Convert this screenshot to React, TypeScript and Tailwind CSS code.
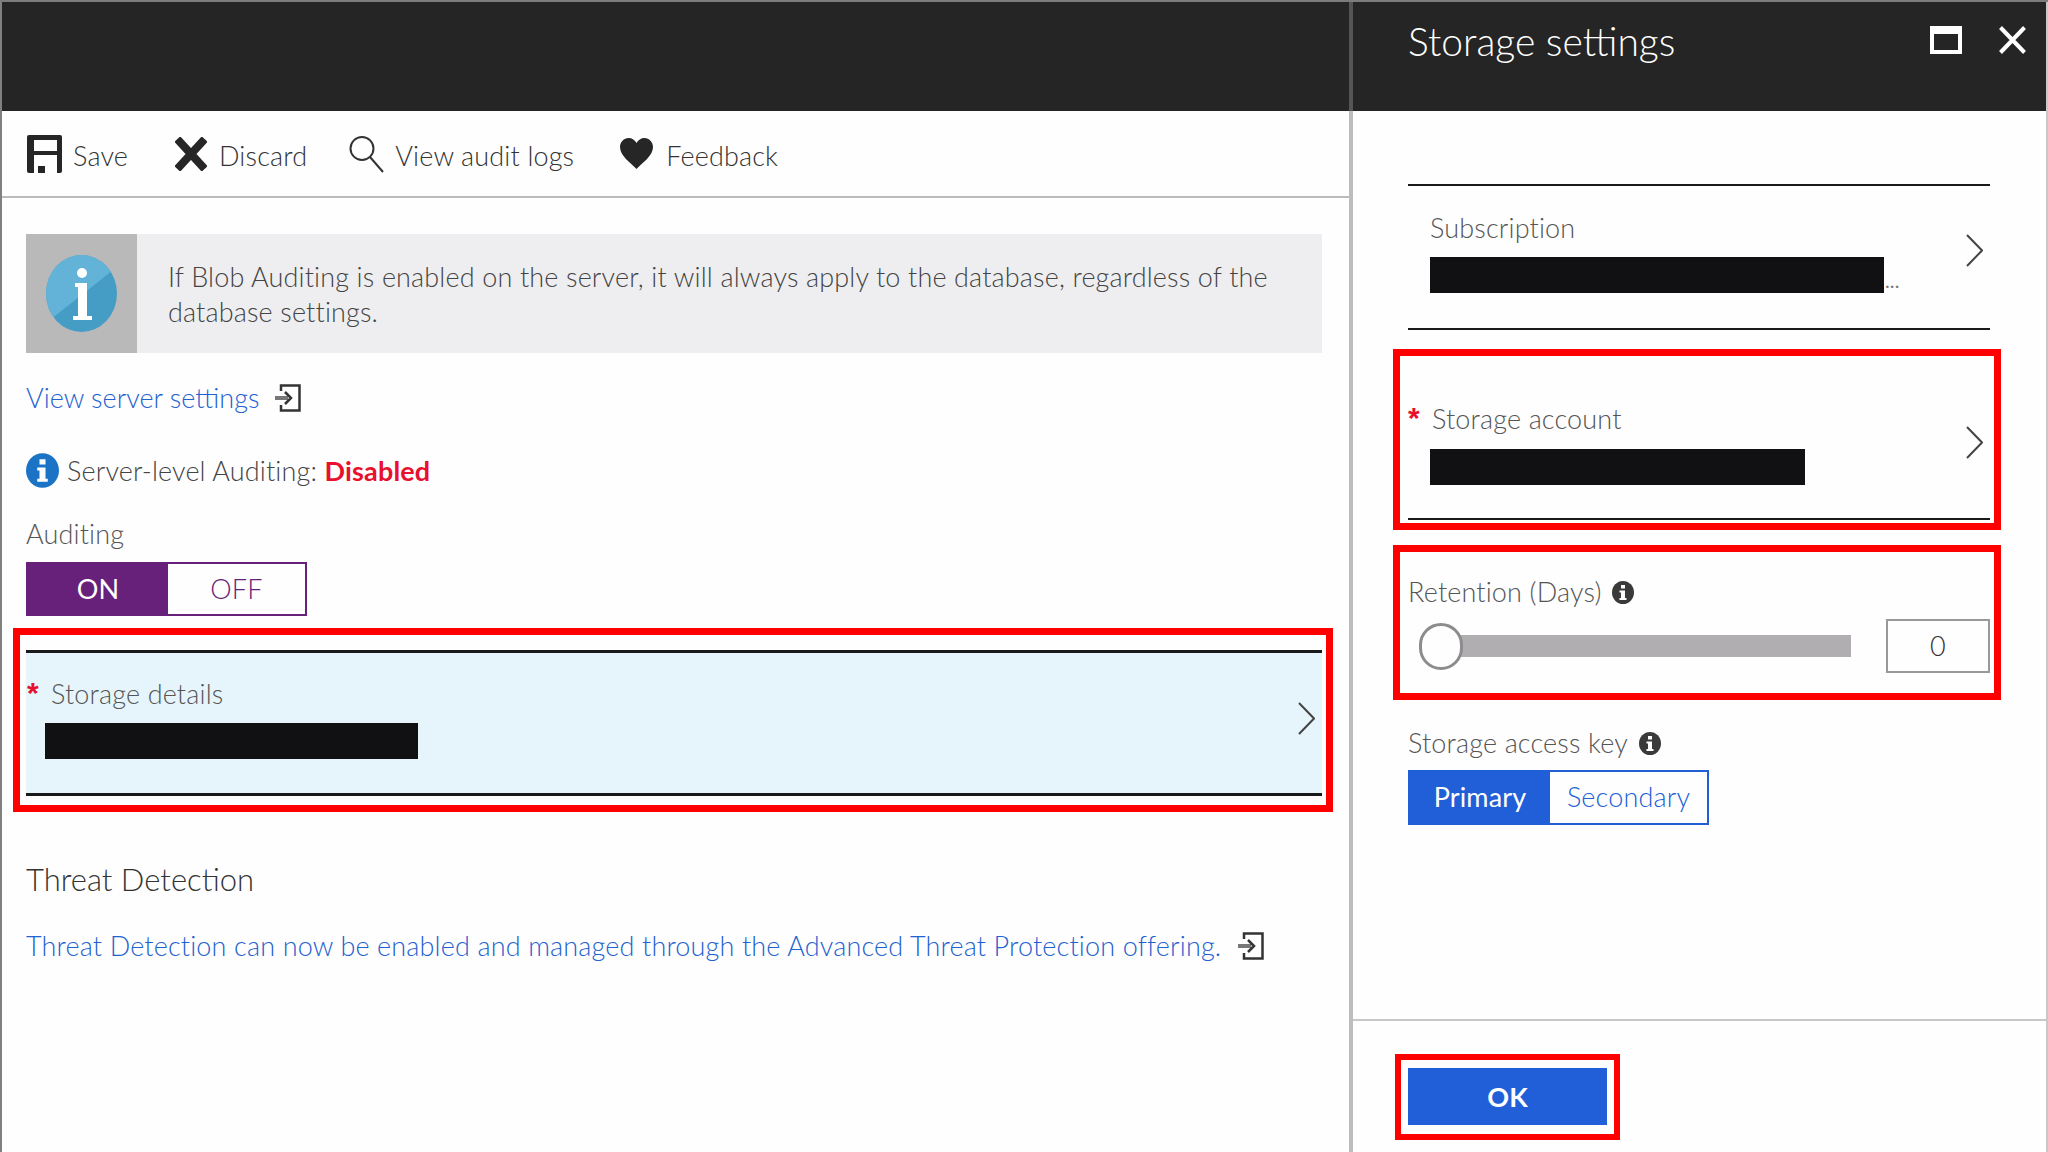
const font = 'font-["Lato","Open_Sans",sans-serif] font-light';

const SaveIcon = () => (
  <svg width="35" height="38" viewBox="0 0 35 38">
    <path d="M2 0H33a2 2 0 0 1 2 2V36a2 2 0 0 1-2 2H2a2 2 0 0 1-2-2V2a2 2 0 0 1 2-2z" fill="#262626" />
    <rect x="7" y="5" width="23" height="11" fill="#fff" />
    <rect x="7" y="20" width="23" height="18" fill="#fff" />
    <rect x="11" y="31" width="7" height="7" fill="#262626" />
  </svg>
);

const DiscardIcon = () => (
  <svg width="32" height="34" viewBox="0 0 32 34">
    <path d="M5 5L27 29M27 5L5 29" stroke="#262626" strokeWidth="8" strokeLinecap="square" fill="none" />
  </svg>
);

const SearchIcon = () => (
  <svg width="36" height="38" viewBox="0 0 36 38" fill="none">
    <circle cx="14" cy="13.500" r="11.500" stroke="#333" strokeWidth="2" />
    <path d="M22 22L35 37" stroke="#333" strokeWidth="2" />
  </svg>
);

const HeartIcon = () => (
  <svg width="33" height="31" viewBox="0 0 33 31">
    <path d="M16.500 31C11 25 0 18 0 9C0 4 4 0 8.500 0C12 0 15 2 16.500 5C18 2 21 0 24.500 0C29 0 33 4 33 9C33 18 22 25 16.500 31Z" fill="#262626" />
  </svg>
);

const OpenIcon = () => (
  <svg width="26" height="28" viewBox="0 0 26 28" fill="none">
    <path d="M6 7V1.500H24.500V26.500H6V21" stroke="#333" strokeWidth="2.500" />
    <path d="M0 14H13" stroke="#777" strokeWidth="4" />
    <path d="M10 8L16 14L10 20" stroke="#333" strokeWidth="2.500" />
  </svg>
);

const BigInfo = () => (
  <svg width="71" height="77" viewBox="0 0 71 77">
    <clipPath id="oval">
      <ellipse cx="35.500" cy="38.500" rx="35.500" ry="38.500" />
    </clipPath>
    <g clipPath="url(#oval)">
      <rect width="71" height="77" fill="#459dc6" />
      <path d="M0 0H71V12L0 68Z" fill="#62b3d7" />
    </g>
    <circle cx="36" cy="18" r="5" fill="#fff" />
    <path d="M29 28H41V61H46V65H27V61H32V32H29Z" fill="#fff" />
  </svg>
);

const SmallInfo = ({ color, w, h }: { color: string; w: number; h: number }) => (
  <svg width={w} height={h} viewBox="0 0 22 23">
    <ellipse cx="11" cy="11.500" rx="11" ry="11.500" fill={color} />
    <rect x="9" y="4" width="4" height="3.500" fill="#fff" />
    <path d="M7.500 9.500H13V17H14.500V19H7.500V17H9V11.500H7.500Z" fill="#fff" />
  </svg>
);

const Chevron = () => (
  <svg width="17" height="33" viewBox="0 0 17 33" fill="none">
    <path d="M1 1L16 16.500L1 32" stroke="#444" strokeWidth="2" />
  </svg>
);

const Star = () => (
  <span className='font-["Liberation_Sans",sans-serif] text-[30px] leading-[30px] font-bold text-[#e8112d]'>*</span>
);

const Bar = ({ w }: { w: string }) => <div className={`${w} h-[36px] bg-[#111114]`} />;

export default function App() {
  return (
    <div className={`${font} flex h-[1152px] w-[2048px] overflow-hidden border-t-2 border-[#7c7c7c] bg-[#fefefe] text-[27px] tracking-[0.15px] text-[#444]`}>
      {/* left blade */}
      <div className="flex w-[1349px] shrink-0 flex-col border-l-2 border-[#808080]">
        <div className="h-[109px] bg-[#252525]" />
        <div className="flex h-[87px] items-center border-b-2 border-[#bbb] pl-[25px] text-[#333]">
          <div className="flex items-center gap-[11px]"><SaveIcon /><span className="pt-[5px]">Save</span></div>
          <div className="ml-[47px] flex items-center gap-[12px]"><DiscardIcon /><span className="pt-[5px]">Discard</span></div>
          <div className="ml-[41px] flex items-center gap-[11px]"><SearchIcon /><span className="pt-[5px]">View audit logs</span></div>
          <div className="ml-[46px] flex items-center gap-[13px]"><HeartIcon /><span className="pt-[5px]">Feedback</span></div>
        </div>

        <div className="flex flex-col pl-[24px] pr-[27px]">
          <div className="mt-[36px] flex h-[119px] bg-[#eeeef0]">
            <div className="flex w-[111px] shrink-0 items-center justify-center bg-[#b9b9b9]"><BigInfo /></div>
            <p className="pl-[31px] pr-[40px] pt-[25px] leading-[35px] text-[#444]">
              If Blob Auditing is enabled on the server, it will always apply to the database, regardless of the database settings.
            </p>
          </div>

          <div className="mt-[30px] flex h-[30px] items-center gap-[16px] tracking-normal text-[#1f62d0]">
            View server settings <OpenIcon />
          </div>

          <div className="mt-[39px] flex h-[36px] items-center gap-[8px] text-[#444]">
            <SmallInfo color="#1a73c4" w={33} h={35} />
            <span className="pt-[3px]">
              Server-level Auditing: <span className="font-bold text-[#e8112d]">Disabled</span>
            </span>
          </div>

          <div className="mt-[31px] h-[30px] leading-[30px] text-[#555]">Auditing</div>
          <div className="mt-[13px] flex h-[54px] w-[281px] border-2 border-[#68217a]">
            <div className="flex w-[140px] items-center justify-center bg-[#68217a] font-normal text-white">ON</div>
            <div className="flex flex-1 items-center justify-center text-[#68217a]">OFF</div>
          </div>

          <div className="-ml-[13px] -mr-[11px] mt-[12px] h-[184px] border-[7px] border-[#ff0000] pl-[6px] pr-[4px] pt-[15px]">
            <div className="flex h-[146px] items-center justify-between border-y-[3px] border-[#1a1a1a] bg-[#e5f5fb] pb-[10px] pr-[7px]">
              <div className="flex flex-col">
                <div className="mt-[2px] flex h-[30px] items-center text-[#555]">
                  <span className="mt-[-2px] w-[25px] pl-[1px]"><Star /></span>Storage details
                </div>
                <div className="ml-[19px] mt-[14px]"><Bar w="w-[373px]" /></div>
              </div>
              <Chevron />
            </div>
          </div>

          <div className="mt-[47px] h-[40px] text-[31px] leading-[40px] tracking-normal text-[#333]">Threat Detection</div>
          <div className="mt-[32px] flex h-[30px] items-center gap-[17px] text-[#1f62d0]">
            Threat Detection can now be enabled and managed through the Advanced Threat Protection offering. <OpenIcon />
          </div>
        </div>
      </div>

      {/* divider */}
      <div className="flex w-[4px] shrink-0 flex-col bg-[#bdbdbd]">
        <div className="h-[109px] bg-[#555]" />
      </div>

      {/* right blade */}
      <div className="flex flex-1 flex-col border-r-2 border-[#c8c8c8]">
        <div className="flex h-[109px] items-start justify-between bg-[#252525] pl-[55px] pr-[20px] text-white">
          <div className="mt-[19px] text-[39px] leading-[40px] tracking-normal">Storage settings</div>
          <div className="mt-[24px] flex items-start gap-[37px]">
            <svg width="32" height="28" viewBox="0 0 32 28" fill="none">
              <rect x="2" y="2" width="28" height="24" stroke="#fff" strokeWidth="4" />
              <rect x="0" y="0" width="32" height="8" fill="#fff" />
            </svg>
            <svg width="27" height="28" viewBox="0 0 27 28" fill="none">
              <path d="M1.500 1.500L25.500 26.500M25.500 1.500L1.500 26.500" stroke="#fff" strokeWidth="4" />
            </svg>
          </div>
        </div>

        <div className="flex flex-1 flex-col pl-[55px] pr-[56px]">
          <div className="mt-[73px] flex h-[146px] items-center justify-between border-y-2 border-[#1a1a1a] pr-[7px]">
            <div className="mb-[8px] flex flex-col pl-[22px]">
              <div className="h-[30px] leading-[30px] text-[#555]">Subscription</div>
              <div className="mt-[14px] flex items-end">
                <Bar w="w-[454px]" />
                <span className="mb-[4px] ml-[1px] text-[20px] leading-[18px] font-normal text-[#777]">...</span>
              </div>
            </div>
            <span className="mb-[14px]"><Chevron /></span>
          </div>

          <div className="-ml-[15px] -mr-[11px] mt-[19px] h-[181px] border-[7px] border-[#ff0000] pl-[8px] pr-[4px]">
            <div className="flex h-[164px] items-center justify-between border-b-2 border-[#1a1a1a] pr-[7px]">
              <div className="flex flex-col pt-[15px]">
                <div className="flex h-[30px] items-center text-[#555]">
                  <span className="mt-[-2px] w-[24px]"><Star /></span>Storage account
                </div>
                <div className="ml-[22px] mt-[14px]"><Bar w="w-[375px]" /></div>
              </div>
              <span className="mt-[11px]"><Chevron /></span>
            </div>
          </div>

          <div className="-ml-[15px] -mr-[11px] mt-[15px] flex h-[155px] flex-col border-[7px] border-[#ff0000] pl-[8px] pr-[4px] pt-[25px]">
            <div className="flex h-[30px] items-center gap-[10px] text-[#555]">
              Retention (Days) <span className="mt-[1px]"><SmallInfo color="#3a3a3a" w={22} h={23} /></span>
            </div>
            <div className="mt-[12px] flex h-[54px] items-center justify-between">
              <div className="relative ml-[11px] flex h-[47px] w-[432px] items-center">
                <div className="ml-[22px] h-[22px] flex-1 bg-[#b0aeb0]" />
                <div className="absolute left-0 top-0 h-[47px] w-[44px] rounded-full border-[3px] border-[#8c8c8c] bg-[#fefefe]" />
              </div>
              <div className="flex h-[54px] w-[104px] items-center justify-center border-2 border-[#999] text-[#333]">0</div>
            </div>
          </div>

          <div className="mt-[28px] flex h-[30px] items-center gap-[11px] text-[#555]">
            Storage access key <span className="mt-[1px]"><SmallInfo color="#3a3a3a" w={22} h={23} /></span>
          </div>
          <div className="mt-[12px] flex h-[55px] w-[301px] border-2 border-[#205fd8]">
            <div className="flex w-[140px] items-center justify-center bg-[#205fd8] font-normal text-white">Primary</div>
            <div className="flex flex-1 items-center justify-center text-[#205fd8]">Secondary</div>
          </div>
        </div>

        <div className="h-[133px] border-t-2 border-[#c8c8c8] pl-[42px] pt-[33px]">
          <div className="h-[86px] w-[225px] border-[6px] border-[#ff0000] px-[7px] pt-[8px]">
            <div className="flex h-[57px] items-center justify-center bg-[#205fd8] pt-[2px] font-bold text-white">OK</div>
          </div>
        </div>
      </div>
    </div>
  );
}
